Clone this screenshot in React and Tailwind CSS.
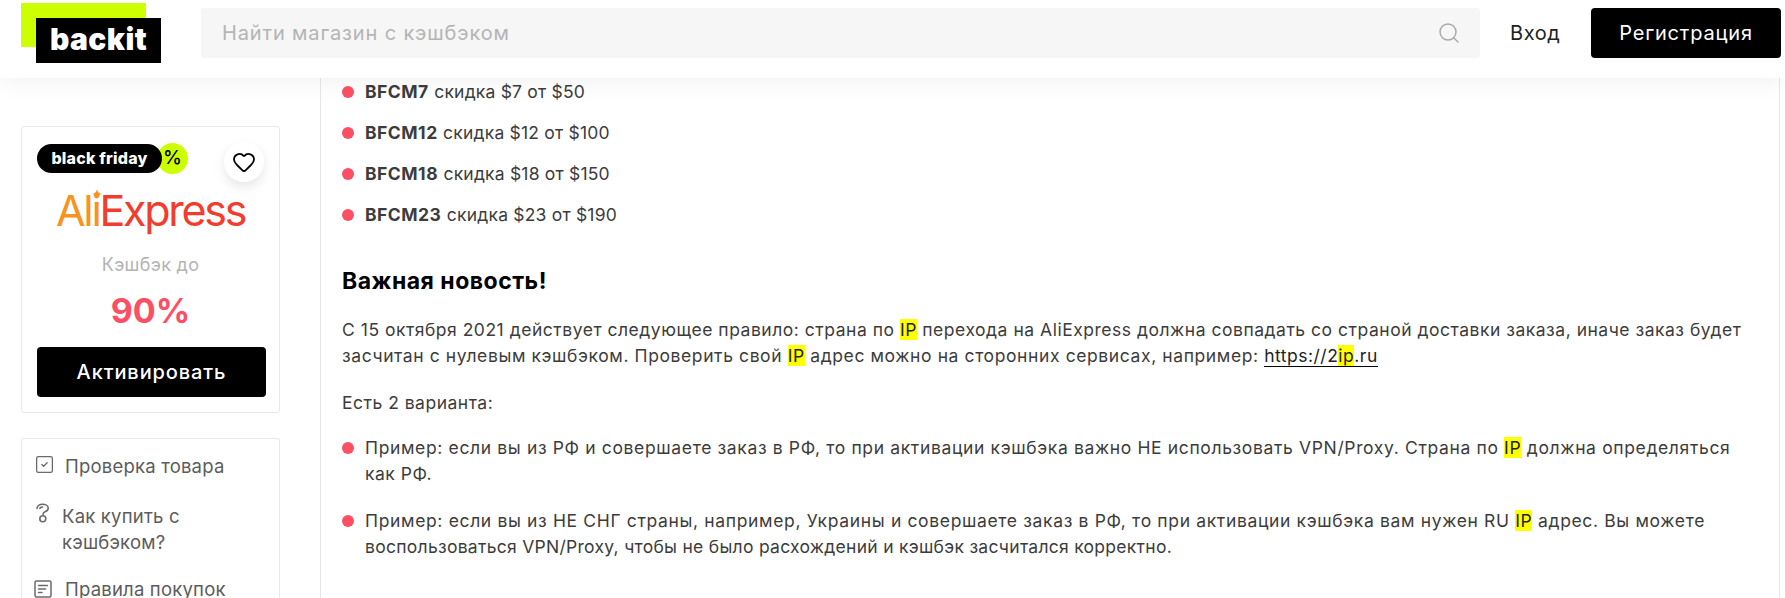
import React from 'react';
import { Heart, Search, SquareCheck } from 'lucide-react';

const Mark = ({ children }) => <span className="bg-[#ffff00] text-[#222]">{children}</span>;

const Bullet = ({ children, className = '' }) => (
  <li className={`flex items-start ${className}`}>
    <span className="mt-[7px] mr-[11px] h-3 w-3 shrink-0 rounded-full bg-[#fc4f63]"></span>
    <span>{children}</span>
  </li>
);

const codes = [
  ['BFCM7', 'скидка $7 от $50'],
  ['BFCM12', 'скидка $12 от $100'],
  ['BFCM18', 'скидка $18 от $150'],
  ['BFCM23', 'скидка $23 от $190'],
];

function QuestionIcon() {
  return (
    <svg width="16" height="20" viewBox="0 0 16 20" fill="none" stroke="#6b6b6b" strokeWidth="1.6" strokeLinecap="round">
      <path d="M2 5.500C2 3 4.600 1.200 7.600 1.200c3 0 5.600 1.600 5.600 4 0 2-1.700 2.900-3.200 3.600C8.700 9.400 8 10 8 11.500" />
      <path d="M5 5.500c0-1 1.200-1.500 2.600-1.500" />
      <circle cx="7.800" cy="15.800" r="3" />
    </svg>
  );
}

function RulesIcon() {
  return (
    <svg width="18" height="18" viewBox="0 0 18 18" fill="none" stroke="#6b6b6b" strokeWidth="1.500" strokeLinecap="round">
      <rect x="1" y="1" width="16" height="16" rx="1.500" />
      <path d="M4.500 5.500h9M4.500 9h7M4.500 12.500h3.500" />
    </svg>
  );
}

export default function App() {
  return (
    <div className="h-[598px] overflow-hidden bg-white font-['Inter',sans-serif] text-[#3c3c3c]">
      <header className="relative z-10 flex h-[78px] items-start bg-white pr-1 shadow-[0_6px_20px_rgba(0,0,0,0.05)]">
        <a className="relative mt-[3px] ml-[21px] h-[60px] w-[140px] shrink-0">
          <span className="block h-[44px] w-[125px] bg-[#ccff00]"></span>
          <span className="absolute top-[15px] left-[15px] flex h-[45px] w-[125px] items-center justify-center bg-black pb-[3px] text-[30px] font-black tracking-[0.4px] text-white">
            backit
          </span>
        </a>
        <div className="mt-2 ml-10 flex h-[50px] flex-1 items-center justify-between rounded-[3px] bg-[#f6f6f6] pr-[19px] pl-[21px]">
          <span className="text-[20px] tracking-[0.85px] text-[#b4b4b4]">Найти магазин с кэшбэком</span>
          <Search size={24} strokeWidth={1.4} className="text-[#a8a8a8]" />
        </div>
        <a className="mt-[8px] ml-[30px] flex h-[50px] w-[52px] items-center text-[20px] tracking-[0.6px] text-[#222]">Вход</a>
        <button className="mt-2 ml-[29px] h-[50px] w-[190px] rounded-[4px] bg-black text-[20px] tracking-[0.8px] text-white">
          Регистрация
        </button>
      </header>

      <main className="flex h-[520px] pr-[5px]">
        <aside className="w-[321px] shrink-0 border-r border-[#e6e6e6] pt-[48px] pl-[21px]">
          <div className="relative h-[287px] w-[259px] rounded-[3px] border border-[#e8e8e8] px-[15px] pt-4">
            <div className="flex items-center">
              <span className="relative z-10 flex h-[29px] w-[125px] items-center justify-center rounded-full bg-black pb-[2px] text-[16px] font-extrabold tracking-[0.2px] text-white">
                black friday
              </span>
              <span className="-ml-[5px] flex h-[31px] w-[31px] items-center justify-center rounded-full bg-[#ccff00] text-[19px] font-medium text-black">
                %
              </span>
            </div>
            <button className="absolute top-[15px] right-[15px] flex h-10 w-10 items-center justify-center rounded-full bg-white shadow-[0_5px_12px_rgba(0,0,0,0.1)]">
              <Heart size={24} strokeWidth={1.8} className="text-black" />
            </button>
            <div className="mt-[13px] flex h-[46px] items-center justify-center text-[43px] leading-none font-normal tracking-[-2.300px]">
              <span className="relative text-[#f7931e]">
                Ali
                <svg width="10" height="10" viewBox="0 0 12 12" className="absolute top-0 -right-[2px]">
                  <path d="M6 0C6.500 3.500 8.500 5.500 12 6 8.500 6.500 6.500 8.500 6 12 5.500 8.500 3.500 6.500 0 6 3.500 5.500 5.500 3.500 6 0Z" fill="#f7931e" />
                </svg>
              </span>
              <span className="text-[#f23d2e]">Express</span>
            </div>
            <p className="mt-[18px] text-center text-[18px] tracking-[0.3px] text-[#b4b4b4]">Кэшбэк до</p>
            <p className="mt-[12px] text-center text-[34px] leading-[41px] font-bold text-[#fc4f63]">90%</p>
            <button className="mt-[16px] h-[50px] w-[229px] rounded-[4px] bg-black text-[20px] font-medium tracking-[0.9px] text-white">
              Активировать
            </button>
          </div>

          <div className="mt-[25px] w-[259px] rounded-t-[3px] border border-b-0 border-[#e8e8e8] pt-[14px] pl-3 text-[18.500px] tracking-[0.2px] text-[#5c5c5c]">
            <div className="flex items-center">
              <SquareCheck size={21} strokeWidth={1.500} className="-mt-[5px] text-[#6b6b6b]" />
              <span className="ml-[10px]">Проверка товара</span>
            </div>
            <div className="mt-[22px] flex items-start">
              <span className="ml-[1px]"><QuestionIcon /></span>
              <span className="ml-[11px] leading-[26px]">Как купить с<br />кэшбэком?</span>
            </div>
            <div className="mt-[25px] flex items-center">
              <RulesIcon />
              <span className="ml-[13px] leading-[18px]">Правила покупок</span>
            </div>
          </div>
        </aside>

        <section className="flex-1 border-r border-[#e6e6e6] pt-[1px] pl-[21px] text-[17.500px] leading-[26px] tracking-[0.5px]">
          <ul className="flex flex-col gap-[15px]">
            {codes.map(([code, text]) => (
              <Bullet key={code}>
                <b className="font-bold">{code}</b> <span className="tracking-[0.2px]">{text}</span>
              </Bullet>
            ))}
          </ul>
          <h2 className="mt-[38px] text-[23px] leading-[30px] font-bold tracking-[0.5px] text-black">Важная новость!</h2>
          <p className="mt-[21px]">
            <span className="tracking-[0.52px]">С 15 октября 2021 действует следующее правило: страна по <Mark>IP</Mark> перехода на AliExpress должна совпадать со страной доставки заказа, иначе заказ будет</span>
            <br />
            <span className="tracking-[0.6px]">засчитан с нулевым кэшбэком. Проверить свой <Mark>IP</Mark> адрес можно на сторонних сервисах, например:{' '}</span>
            <a className="border-b border-black text-[#222]">https://2<Mark>ip</Mark>.ru</a>
          </p>
          <p className="mt-[21px]">Есть 2 варианта:</p>
          <ul className="mt-[19px] flex flex-col gap-[21px]">
            <Bullet>
              <span className="tracking-[0.64px]">Пример: если вы из РФ и совершаете заказ в РФ, то при активации кэшбэка важно НЕ использовать VPN/Proxy. Страна по <Mark>IP</Mark> должна определяться</span>
              <br />
              как РФ.
            </Bullet>
            <Bullet>
              <span className="tracking-[0.65px]">Пример: если вы из НЕ СНГ страны, например, Украины и совершаете заказ в РФ, то при активации кэшбэка вам нужен RU <Mark>IP</Mark> адрес. Вы можете</span>
              <br />
              <span className="tracking-[0.28px]">воспользоваться VPN/Proxy, чтобы не было расхождений и кэшбэк засчитался корректно.</span>
            </Bullet>
          </ul>
        </section>
      </main>
    </div>
  );
}
